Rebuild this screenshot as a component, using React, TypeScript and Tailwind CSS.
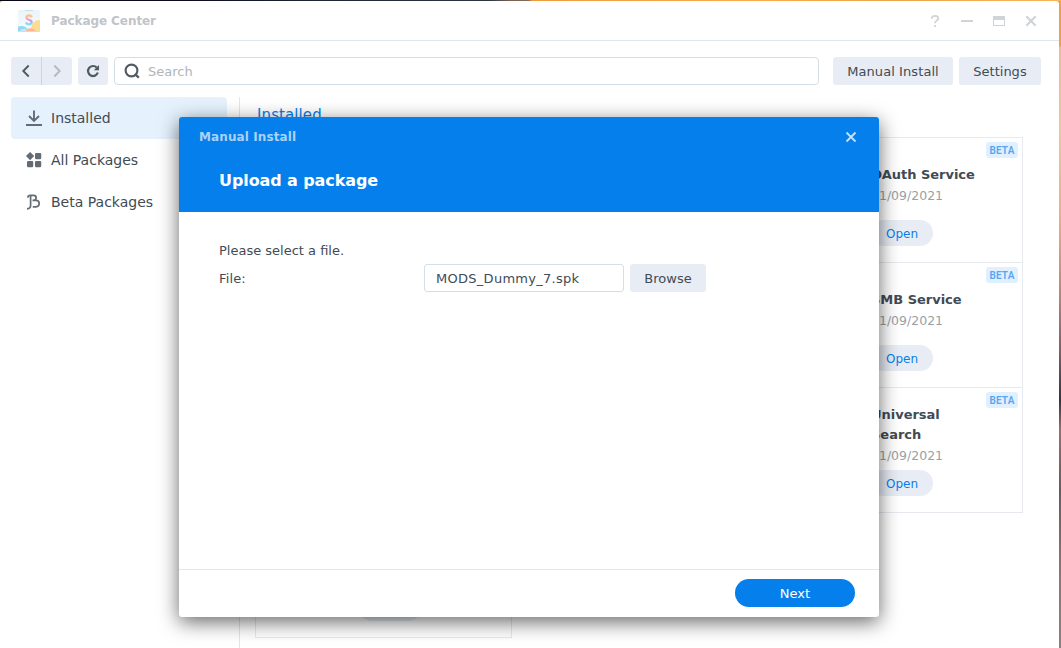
import React from "react";

const REG = "font-['DejaVu_Sans',Verdana,sans-serif]";

const btn = "flex h-7 items-center justify-center rounded-[3px] bg-[#e8edf5] pt-px text-[13px] text-[#414b55]";

function Brand() {
  return (
    <svg width="22" height="22" viewBox="0 0 22 22">
      <defs>
        <linearGradient id="s" x1="0" y1="0" x2="0" y2="1">
          <stop offset="0" stopColor="#ffc66e" />
          <stop offset=".35" stopColor="#f8a5c8" />
          <stop offset=".7" stopColor="#a9a2fa" />
          <stop offset="1" stopColor="#86dff5" />
        </linearGradient>
        <linearGradient id="sky" x1="0" y1="0" x2="0" y2="1">
          <stop offset="0" stopColor="#e9f4fa" />
          <stop offset="1" stopColor="#f8fbfd" />
        </linearGradient>
        <clipPath id="c"><rect width="22" height="22" rx="1.5" /></clipPath>
      </defs>
      <g clipPath="url(#c)">
        <rect width="22" height="22" fill="url(#sky)" />
        <rect x="7" width="8" height="1" fill="#c9dde8" />
        <circle cx="21.5" cy="18.500" r="8.500" fill="#fbdc94" />
        <ellipse cx="3" cy="20.500" rx="7" ry="4.500" fill="#93d7f7" />
        <ellipse cx="7" cy="21.500" rx="5" ry="2.800" fill="#c4e9fa" />
        <ellipse cx="12.500" cy="21.500" rx="5" ry="3.300" fill="#fcb896" />
        <rect y="21" width="22" height="1" fill="#d8dcdf" />
      </g>
      <path d="M13.6 7.2C13.3 5.8 12.3 5.400 11 5.400c-1.500 0-2.500.7-2.500 2 0 3 5.200 1.500 5.200 4.700 0 1.500-1.200 2.300-2.700 2.300-1.600 0-2.600-.7-2.800-2.100" fill="none" stroke="url(#s)" strokeWidth="2.100" />
    </svg>
  );
}

function TitleBar() {
  return (
    <header className="flex h-10 shrink-0 items-center border-b border-[#dfe6ee] pl-[18px] pr-[22px]">
      <Brand />
      <h1 className="ml-[11px] flex-1 text-[12px] font-bold tracking-[-0.07px] text-[#c0c4c8]">Package Center</h1>
      <div className="flex items-center gap-5 text-[#d0d4d7]">
        <svg width="12" height="14" viewBox="0 0 12 14" fill="none" stroke="currentColor" strokeWidth="1.800"><path d="M2.800 4.800C2.800 2.700 4 1.900 6 1.900s3.300 1 3.300 2.600C9.300 6.500 6 6.700 6 9.200M6 11v2" /></svg>
        <svg width="12" height="14" viewBox="0 0 12 14" fill="currentColor"><path d="M0 6h12v2H0z" /></svg>
        <svg width="12" height="14" viewBox="0 0 12 14"><path fillRule="evenodd" d="M0 2h12v10H0zM1 6v5h10V6z" fill="currentColor" /></svg>
        <svg width="12" height="14" viewBox="0 0 12 14" fill="none" stroke="currentColor" strokeWidth="2.200"><path d="m1.300 2.300 9.400 9.400m0-9.400-9.400 9.400" /></svg>
      </div>
    </header>
  );
}

function Toolbar() {
  return (
    <div className="flex h-14 shrink-0 items-center pl-[11px] pr-[18px] pt-[4px]">
      <div className="flex h-7 w-[61px] overflow-hidden rounded-[3px] bg-[#e8edf5]">
        <div className="flex w-[31px] items-center justify-center border-r border-[#c8d6e2] text-[#505a64]">
          <svg width="10" height="14" viewBox="0 0 10 14" fill="none" stroke="currentColor" strokeWidth="1.900"><path d="M7.700 1.500 2.300 7l5.400 5.500" /></svg>
        </div>
        <div className="flex flex-1 items-center justify-center text-[#b3b9c1]">
          <svg width="10" height="14" viewBox="0 0 10 14" fill="none" stroke="currentColor" strokeWidth="1.900"><path d="M2.300 1.500 7.700 7l-5.400 5.500" /></svg>
        </div>
      </div>
      <div className="ml-[6px] flex h-7 w-[30px] items-center justify-center rounded-[3px] bg-[#e8edf5]">
        <svg width="14" height="14" viewBox="0 0 14 14" fill="none" stroke="#505a64" strokeWidth="2.200"><path d="M11.800 8.500A5 5 0 1 1 10.700 3.600" /><path d="M13 1v5.200H7.800z" fill="#505a64" stroke="none" /></svg>
      </div>
      <div className="ml-[6px] flex h-7 w-[705px] items-center rounded-[4px] border border-[#d2dfe8] pl-[9px] text-[13px] text-[#b0b5ba]">
        <svg width="16" height="16" viewBox="0 0 16 16" fill="none" stroke="#505a64" strokeWidth="2.100"><circle cx="7.500" cy="7.500" r="5.900" /><path d="m10.900 10.900 3.900 3.900" strokeWidth="2.300" /></svg>
        <span className="ml-[8px] pt-px">Search</span>
      </div>
      <button className={`${btn} ml-[14px] w-[120px] tracking-[0.08px]`}>Manual Install</button>
      <button className={`${btn} ml-[6px] w-[82px]`}>Settings</button>
    </div>
  );
}

function SideItem({ icon, label, active }: { icon: React.ReactNode; label: string; active?: boolean }) {
  return (
    <li className={`flex h-[42px] items-center gap-[9px] rounded-[4px] pl-[15px] text-[14px] text-[#414b55] ${active ? "bg-[#e5f2fe]" : ""}`}>
      {icon}
      <span>{label}</span>
    </li>
  );
}

function Sidebar() {
  return (
    <ul className="w-[216px] shrink-0">
      <SideItem active label="Installed" icon={<svg width="16" height="16" viewBox="0 0 16 16" fill="none" stroke="#636c75" strokeWidth="1.900"><path d="M8 .5v10M3 6l5 5 5-5M0 15h16" /></svg>} />
      <SideItem label="All Packages" icon={<svg width="16" height="16" viewBox="0 0 16 16" fill="#636c75"><path d="M4.100 0 8.200 4.100 4.100 8.200 0 4.100z" /><rect x="9" y="1" width="6.200" height="6.200" rx="1.200" /><rect x="1" y="9" width="6.200" height="6.200" rx="1.200" /><rect x="9" y="9" width="6.200" height="6.200" rx="1.200" /></svg>} />
      <SideItem label="Beta Packages" icon={<svg width="16" height="16" viewBox="0 0 16 16" fill="none" stroke="#636c75" strokeWidth="1.700"><path d="M1.900 3.800C1.900 1.900 2.600 1.400 4.400 1.400H7.500C11 1.400 11 6.300 7.500 6.300H6.500M7.500 6.300H10C14.200 6.300 14.200 12.800 10 12.800H6.800M4.600 1.400V11.500C4.600 13.600 3.500 14.600 1 14.800" /></svg>} />
    </ul>
  );
}

function OpenButton() {
  return <button className="h-[26px] w-[62px] rounded-full bg-[#e8edf5] pt-px text-[12px] text-[#057feb]">Open</button>;
}

function Card({ title, last }: { title?: string; last?: boolean }) {
  return (
    <article className="flex h-[125px] border-b border-r border-[#e6eaee]">
      {title && (
        <>
          <div className={`ml-[103px] flex w-[106px] flex-col items-start ${last ? "gap-[2px] pt-[17px]" : "gap-[7px] pt-[27px]"}`}>
            <div>
              <h3 className="whitespace-pre text-[13px] font-bold leading-5 tracking-[-0.02px] text-[#414b55]">{title}</h3>
              <p className="mb-[3px] mt-px text-[12.500px] leading-5 text-[#9a9fa5]">01/09/2021</p>
            </div>
            <div className={last ? "-mt-px" : "mt-[4px]"}><OpenButton /></div>
          </div>
          <span className="ml-auto mr-1 mt-1 flex h-4 w-8 items-center justify-center rounded-[3px] bg-[#e0f0fe] pt-px font-['Roboto',sans-serif] text-[10px] font-semibold tracking-[0.15px] text-[#57a6f3]">BETA</span>
        </>
      )}
    </article>
  );
}

function Content() {
  const rows = ["OAuth Service", "SMB Service", "Universal\nSearch"];
  return (
    <main className="ml-[12px] flex-1 border-l border-[#dfe6ee] pl-[15px]">
      <h2 className="h-[40px] pl-[2px] pt-[8px] text-[15px] leading-5 tracking-[0.1px] text-[#057feb]">Installed</h2>
      <div className="grid w-[768px] grid-cols-[256px_256px_255px] border-l border-t border-[#e6eaee]">
        {rows.map((title, i) => (
          <React.Fragment key={title}>
            <Card />
            <Card />
            <Card title={title} last={i === 2} />
          </React.Fragment>
        ))}
        <article className="flex h-[125px] items-end border-b border-r border-[#e6eaee] pb-[16px] pl-[103px]">
          <span className="h-[26px] w-[62px] rounded-full bg-[#e8edf5]" />
        </article>
      </div>
    </main>
  );
}

function Dialog() {
  return (
    <section className="absolute left-[179px] top-[117px] flex h-[500px] w-[700px] flex-col overflow-hidden rounded-[3px] bg-white shadow-[0_5px_20px_rgba(0,0,0,0.6)]">
      <header className="h-[95px] shrink-0 bg-[#057feb] pl-5 pr-[22px]">
        <div className="flex h-10 items-center justify-between">
          <h2 className="text-[12px] font-bold tracking-[0.1px] text-[#a8d2f9]">Manual Install</h2>
          <svg width="12" height="12" viewBox="0 0 12 12" fill="none" stroke="#c4e0fb" strokeWidth="1.900"><path d="m1.500 1.500 9 9m0-9-9 9" /></svg>
        </div>
        <h3 className="ml-5 mt-[13px] text-[16px] font-bold leading-[22px] tracking-[-0.1px] text-white">Upload a package</h3>
      </header>
      <div className="flex-1 pl-10 pt-[29px] text-[13px] text-[#414b55]">
        <p className="leading-5">Please select a file.</p>
        <div className="mt-[3px] flex h-7 items-center">
          <span className="w-[205px] pt-px tracking-[0.15px]">File:</span>
          <div className="flex h-7 w-[200px] items-center rounded-[3px] border border-[#d2dfe8] pl-[11px] pt-px text-[13px] tracking-[0.28px]">MODS_Dummy_7.spk</div>
          <button className={`${btn} ml-[6px] w-[76px]`}>Browse</button>
        </div>
      </div>
      <footer className="flex h-12 items-center justify-end border-t border-[#e4e7e9] pb-px pr-6">
        <button className="h-7 w-[120px] rounded-full bg-[#057feb] pt-px text-[13px] text-white">Next</button>
      </footer>
    </section>
  );
}

export default function App() {
  return (
    <div className={`${REG} relative h-[648px] w-[1061px] overflow-hidden bg-[linear-gradient(180deg,#ef9f45_0,#ef9f45_46px,#e8bd94_47px,#e7c9a0_130px,#e4af8c_220px,#b78a80_290px,#7e6268_350px,#343344_400px,#93736e_430px,#675b63_490px,#8b7673_570px,#8d8081_648px)]`}>
      <div className="h-px bg-[linear-gradient(90deg,#080717,#0c0c20_18%,#1c2733_30%,#2b3440_46%,#756052_48%,#8a6b55_49.800%,#f09a3e_50.200%,#f8ab4c_70%,#eda44a_85%,#f7b65c)]" />
      <div className="flex h-[647px] w-[1059px] flex-col rounded-t-[3px] bg-white">
        <TitleBar />
        <Toolbar />
        <div className="flex min-h-0 flex-1 pl-[11px]">
          <Sidebar />
          <Content />
        </div>
      </div>
      <Dialog />
    </div>
  );
}
